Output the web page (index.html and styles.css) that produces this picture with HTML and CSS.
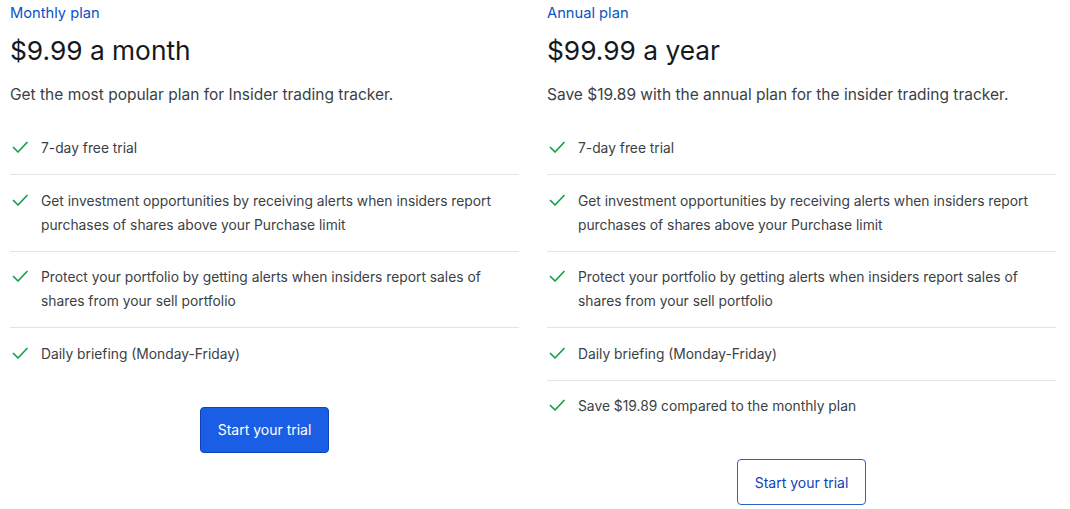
FILE: index.html
```html
<!DOCTYPE html>
<html>
<head>
<meta charset="utf-8">
<link rel="stylesheet" href="styles.css">
</head>
<body>
<div class="plans">
  <section class="plan">
    <div class="plan-name">Monthly plan</div>
    <div class="price">$9.99 a month</div>
    <p class="desc">Get the most popular plan for Insider trading tracker.</p>
    <ul class="features">
      <li><svg class="check" viewBox="0 0 16 16"><path d="M1.5 8.5 L6 13 L15 3.5"/></svg><span>7-day free trial</span></li>
      <li><svg class="check" viewBox="0 0 16 16"><path d="M1.5 8.5 L6 13 L15 3.5"/></svg><span>Get investment opportunities by receiving alerts when insiders report purchases of shares above your Purchase limit</span></li>
      <li><svg class="check" viewBox="0 0 16 16"><path d="M1.5 8.5 L6 13 L15 3.5"/></svg><span>Protect your portfolio by getting alerts when insiders report sales of shares from your sell portfolio</span></li>
      <li><svg class="check" viewBox="0 0 16 16"><path d="M1.5 8.5 L6 13 L15 3.5"/></svg><span>Daily briefing (Monday-Friday)</span></li>
    </ul>
    <div class="actions"><button class="btn btn-primary">Start your trial</button></div>
  </section>
  <section class="plan">
    <div class="plan-name">Annual plan</div>
    <div class="price">$99.99 a year</div>
    <p class="desc">Save $19.89 with the annual plan for the insider trading tracker.</p>
    <ul class="features">
      <li><svg class="check" viewBox="0 0 16 16"><path d="M1.5 8.5 L6 13 L15 3.5"/></svg><span>7-day free trial</span></li>
      <li><svg class="check" viewBox="0 0 16 16"><path d="M1.5 8.5 L6 13 L15 3.5"/></svg><span>Get investment opportunities by receiving alerts when insiders report purchases of shares above your Purchase limit</span></li>
      <li><svg class="check" viewBox="0 0 16 16"><path d="M1.5 8.5 L6 13 L15 3.5"/></svg><span>Protect your portfolio by getting alerts when insiders report sales of shares from your sell portfolio</span></li>
      <li><svg class="check" viewBox="0 0 16 16"><path d="M1.5 8.5 L6 13 L15 3.5"/></svg><span>Daily briefing (Monday-Friday)</span></li>
      <li><svg class="check" viewBox="0 0 16 16"><path d="M1.5 8.5 L6 13 L15 3.5"/></svg><span>Save $19.89 compared to the monthly plan</span></li>
    </ul>
    <div class="actions"><button class="btn btn-outline">Start your trial</button></div>
  </section>
</div>
</body>
</html>
```
FILE: styles.css
```css
html, body {
  margin: 0;
  padding: 0;
  background: #ffffff;
}
body {
  font-family: Inter, "Noto Sans", sans-serif;
  color: #3b3f46;
}
.plans {
  display: grid;
  grid-template-columns: 509px 509px;
  column-gap: 28px;
  padding: 0 10px;
}
.plan {
  display: flex;
  flex-direction: column;
}
.plan-name {
  color: #0a52c6;
  font-size: 14.7px;
  line-height: 20px;
  margin-top: 3px;
}
.price {
  color: #15181d;
  font-size: 26.3px;
  line-height: 34px;
  margin-top: 11px;
}
.desc {
  margin: 15px 0 0;
  font-size: 15.5px;
  line-height: 24px;
  color: #3b3f46;
}
.features {
  list-style: none;
  margin: 15.5px 0 0;
  padding: 0;
}
.features li {
  display: flex;
  align-items: flex-start;
  gap: 13px;
  padding: 13.5px 0 14px;
  font-size: 13.8px;
  line-height: 24px;
  color: #3b3f46;
  border-bottom: 1px solid #e2e4e7;
}
.features li:last-child {
  border-bottom: none;
}
.check {
  flex: none;
  width: 16px;
  height: 16px;
  margin: 3px 0 0 2px;
  fill: none;
  stroke: #14a04a;
  stroke-width: 1.7;
  stroke-linecap: round;
  stroke-linejoin: round;
}
.actions {
  display: flex;
  justify-content: center;
  margin-top: 27px;
}
.btn {
  font-family: Inter, "Noto Sans", sans-serif;
  font-size: 14px;
  width: 129px;
  height: 46px;
  border-radius: 4px;
  cursor: pointer;
}
.btn-primary {
  background: #1b5ee6;
  border: 1px solid #0c45b8;
  color: #ffffff;
}
.btn-outline {
  background: #ffffff;
  border: 1px solid #2c62c8;
  color: #0b46b6;
}
```
